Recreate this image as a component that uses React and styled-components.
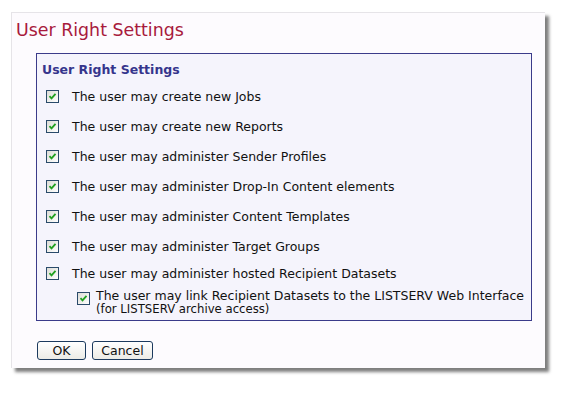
import React from "react";
import styled, { createGlobalStyle } from "styled-components";

const Global = createGlobalStyle`
  body {
    margin: 0;
    background: #ffffff;
    font-family: "DejaVu Sans", Verdana, sans-serif;
  }
`;

const Page = styled.div`
  padding: 12px 0 0 11px;
  width: 576px;
  height: 396px;
  box-sizing: border-box;
`;

const Panel = styled.div`
  width: 534px;
  height: 356px;
  box-sizing: border-box;
  background: #fdfbfe;
  border-top: 1px solid #e6e4e8;
  border-left: 1px solid #e6e4e8;
  box-shadow: 4px 4px 3px rgba(0, 0, 0, 0.5);
  padding: 6px 0 0 4px;
`;

const Title = styled.h1`
  margin: 0;
  font-family: "DejaVu Sans", Verdana, sans-serif;
  font-weight: normal;
  font-size: 17.4px;
  line-height: 22px;
  color: #a81a3c;
`;

const Box = styled.div`
  margin: 12px 0 0 20px;
  width: 496px;
  height: 268px;
  box-sizing: border-box;
  border: 1px solid #3b3b8a;
  background: #f5f4fc;
  padding: 8px 0 0 5px;
`;

const BoxTitle = styled.h2`
  margin: 0 0 11px 0;
  font-size: 12.5px;
  line-height: 16px;
  font-weight: bold;
  color: #35358c;
`;

const List = styled.div`
  display: flex;
  flex-direction: column;
  gap: 15px;
`;

const Row = styled.label`
  display: flex;
  align-items: ${(p) => (p.$top ? "flex-start" : "center")};
  gap: ${(p) => (p.$gap || 13)}px;
  padding-left: ${(p) => p.$indent || 4}px;
  font-size: 12.5px;
  line-height: 15px;
  color: #111111;
  margin-top: ${(p) => p.$mt || 0}px;
`;

const Box13 = styled.span`
  flex: none;
  width: 13px;
  height: 13px;
  box-sizing: border-box;
  border: 1px solid #2a4a6a;
  background: linear-gradient(135deg, #dcdcd6, #ffffff);
  display: flex;
  align-items: center;
  justify-content: center;
  margin-top: ${(p) => p.$mt || 0}px;
`;

const Sub = styled.div`
  font-size: 11.7px;
  line-height: 13px;
`;

const Buttons = styled.div`
  display: flex;
  gap: 6px;
  margin: 20px 0 0 21px;
`;

const Button = styled.button`
  height: 19px;
  padding: 0;
  width: ${(p) => p.$w}px;
  font-family: "DejaVu Sans", Verdana, sans-serif;
  font-size: 12.5px;
  color: #111;
  border: 1px solid #1c3a5e;
  border-radius: 3px;
  background: linear-gradient(#ffffff, #ecebe6);
`;

function Check({ mt }) {
  return (
    <Box13 $mt={mt}>
      <svg width="9" height="9" viewBox="0 0 9 9">
        <path d="M1.5 4.2 L3.5 6.3 L7.5 1.8" fill="none" stroke="#21a121" strokeWidth="1.8" />
      </svg>
    </Box13>
  );
}

const items = [
  "The user may create new Jobs",
  "The user may create new Reports",
  "The user may administer Sender Profiles",
  "The user may administer Drop-In Content elements",
  "The user may administer Content Templates",
  "The user may administer Target Groups",
];

export default function App() {
  return (
    <>
      <Global />
      <Page>
        <Panel>
          <Title>User Right Settings</Title>
          <Box>
            <BoxTitle>User Right Settings</BoxTitle>
            <List>
              {items.map((t) => (
                <Row key={t}>
                  <Check />
                  {t}
                </Row>
              ))}
              <Row $mt={-3}>
                <Check />
                The user may administer hosted Recipient Datasets
              </Row>
            </List>
            <Row $indent={35} $gap={6} $top $mt={7}>
              <Check mt={4} />
              <div>
                The user may link Recipient Datasets to the LISTSERV Web Interface
                <Sub>(for LISTSERV archive access)</Sub>
              </div>
            </Row>
          </Box>
          <Buttons>
            <Button $w={49}>OK</Button>
            <Button $w={61}>Cancel</Button>
          </Buttons>
        </Panel>
      </Page>
    </>
  );
}
